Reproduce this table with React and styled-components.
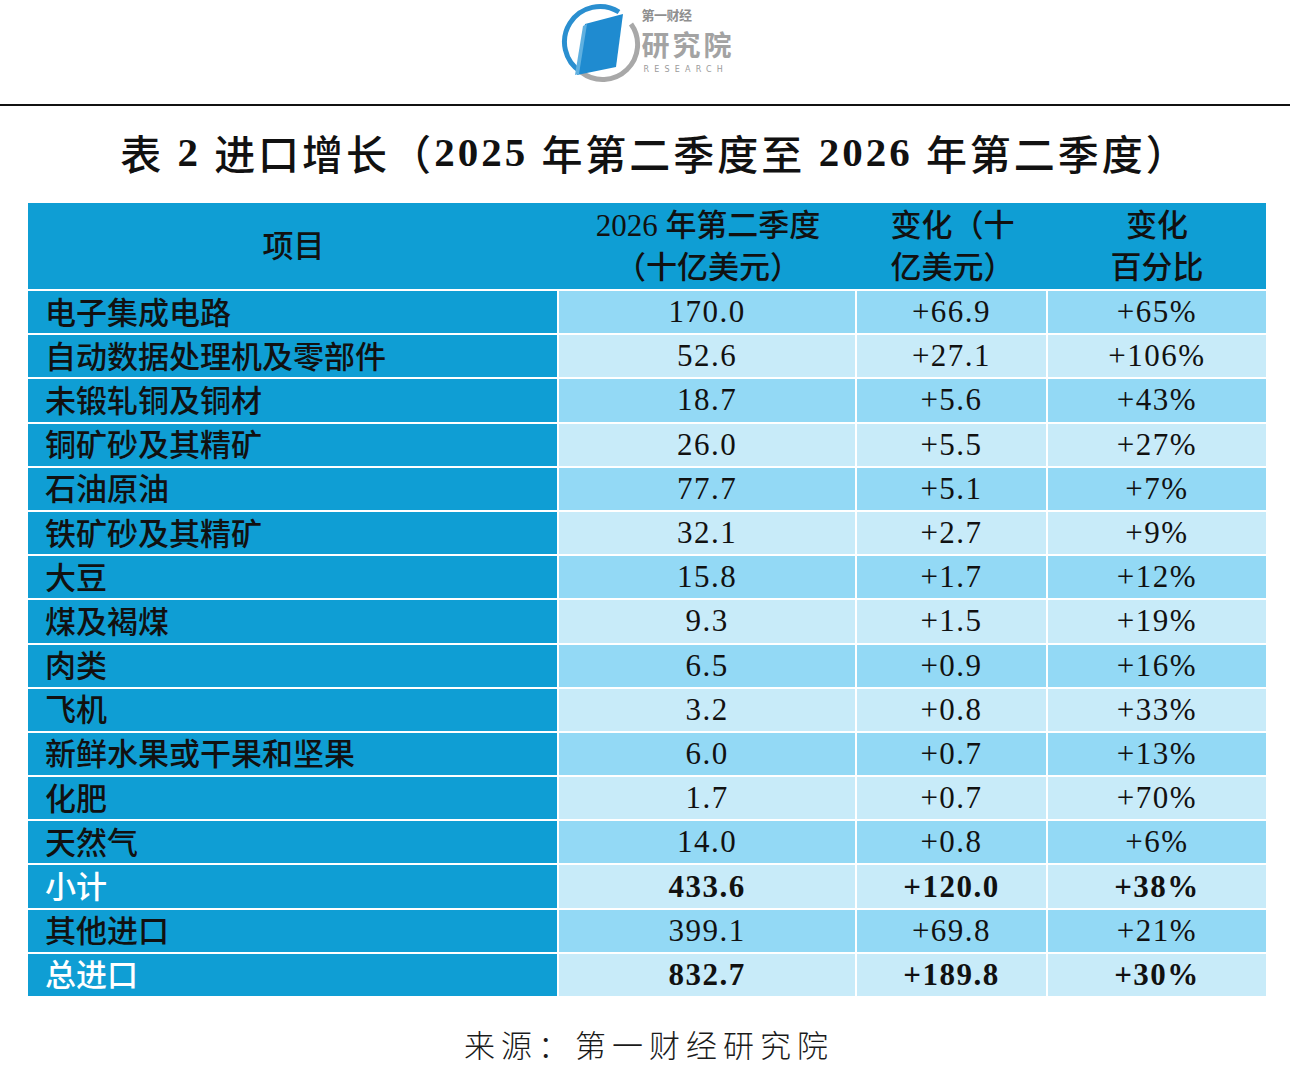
import React from "react";
import styled, { createGlobalStyle } from "styled-components";

const GlobalStyle = createGlobalStyle`
  html, body {
    margin: 0;
    padding: 0;
    background: #ffffff;
  }
  body {
    font-family: "Noto Sans CJK SC", "Noto Sans", sans-serif;
    color: #111111;
  }
`;

const DARK = "#0f9ed4";
const LIGHT = "#93d9f5";
const LIGHTER = "#c8ebf9";

const rows = [
  { name: "电子集成电路", value: "170.0", change: "+66.9", pct: "+65%" },
  { name: "自动数据处理机及零部件", value: "52.6", change: "+27.1", pct: "+106%" },
  { name: "未锻轧铜及铜材", value: "18.7", change: "+5.6", pct: "+43%" },
  { name: "铜矿砂及其精矿", value: "26.0", change: "+5.5", pct: "+27%" },
  { name: "石油原油", value: "77.7", change: "+5.1", pct: "+7%" },
  { name: "铁矿砂及其精矿", value: "32.1", change: "+2.7", pct: "+9%" },
  { name: "大豆", value: "15.8", change: "+1.7", pct: "+12%" },
  { name: "煤及褐煤", value: "9.3", change: "+1.5", pct: "+19%" },
  { name: "肉类", value: "6.5", change: "+0.9", pct: "+16%" },
  { name: "飞机", value: "3.2", change: "+0.8", pct: "+33%" },
  { name: "新鲜水果或干果和坚果", value: "6.0", change: "+0.7", pct: "+13%" },
  { name: "化肥", value: "1.7", change: "+0.7", pct: "+70%" },
  { name: "天然气", value: "14.0", change: "+0.8", pct: "+6%" },
  { name: "小计", value: "433.6", change: "+120.0", pct: "+38%", total: true },
  { name: "其他进口", value: "399.1", change: "+69.8", pct: "+21%" },
  { name: "总进口", value: "832.7", change: "+189.8", pct: "+30%", total: true },
];

const Page = styled.div`
  width: 1290px;
`;

const LogoBar = styled.header`
  height: 104px;
  display: flex;
  justify-content: center;
  align-items: flex-start;
  padding-top: 2px;
  box-sizing: border-box;
`;

const Logo = styled.div`
  display: flex;
  align-items: flex-start;
  margin-left: 6px;
`;

const LogoWords = styled.div`
  display: flex;
  flex-direction: column;
  padding-top: 3px;
`;

const LogoSmall = styled.span`
  font-size: 13px;
  line-height: 19px;
  font-weight: 700;
  letter-spacing: -0.5px;
  color: #8f8f8f;
`;

const LogoBig = styled.span`
  font-size: 28px;
  line-height: 41px;
  font-weight: 700;
  letter-spacing: 3px;
  color: #a3a3a3;
`;

const LogoTiny = styled.span`
  font-family: "DejaVu Sans", sans-serif;
  font-size: 8px;
  line-height: 10px;
  letter-spacing: 5.2px;
  color: #9b9b9b;
  padding-left: 2px;
`;

const Rule = styled.hr`
  margin: 0;
  border: 0;
  height: 2px;
  background: #111111;
`;

const Title = styled.h1`
  margin: 0;
  height: 97px;
  padding: 0 0 6px 20px;
  box-sizing: border-box;
  display: flex;
  align-items: center;
  justify-content: center;
  font-family: "Liberation Serif", "Noto Sans CJK SC", serif;
  font-size: 41px;
  font-weight: 500;
  letter-spacing: 3px;
  color: #111111;
  white-space: pre;
`;

const Digits = styled.b`
  font-weight: 700;
`;

const Table = styled.section`
  margin-left: 28px;
  width: 1238px;
`;

const HeadRow = styled.div`
  display: grid;
  grid-template-columns: 531px 298px 191px 218px;
  height: 86px;
  background: ${DARK};
`;

const HeadCell = styled.div`
  display: flex;
  align-items: center;
  justify-content: center;
  text-align: center;
  font-family: "Liberation Serif", "Noto Sans CJK SC", serif;
  font-size: 31px;
  line-height: 42px;
  font-weight: 500;
  color: #111111;
  padding-top: 2px;
`;

const Body = styled.div`
  display: grid;
  grid-template-columns: 529px 296px 189px 218px;
  grid-auto-rows: 42.2px;
  gap: 2px;
  margin-top: 2px;
  background: #ffffff;
`;

const NameCell = styled.div`
  background: ${DARK};
  display: flex;
  align-items: center;
  padding-left: 17px;
  padding-bottom: 4px;
  box-sizing: border-box;
  font-size: 31px;
  font-weight: 500;
  color: ${(p) => (p.$total ? "#ffffff" : "#111111")};
`;

const NumCell = styled.div`
  background: ${(p) => (p.$odd ? LIGHTER : LIGHT)};
  display: flex;
  align-items: center;
  justify-content: center;
  font-family: "Liberation Serif", serif;
  font-size: 31px;
  letter-spacing: 1.5px;
  font-weight: ${(p) => (p.$total ? 700 : 400)};
  color: #111111;
`;

const Source = styled.footer`
  padding-top: 30px;
  text-align: center;
  font-size: 31px;
  line-height: 36px;
  font-weight: 300;
  letter-spacing: 6px;
  color: #1a1a1a;
  padding-left: 8px;
`;

function LogoMark() {
  return (
    <svg width="80" height="80" viewBox="0 0 80 80">
      <path
        d="M58 10 A35 35 0 1 0 20 70"
        fill="none"
        stroke="#2a8fd0"
        strokeWidth="5"
      />
      <path
        d="M20 70 A35 35 0 0 0 70 22"
        fill="none"
        stroke="#a8a8a8"
        strokeWidth="5"
      />
      <polygon points="24,22 62,12 55,65 16,73" fill="#1f8bd0" />
      <polygon points="22,24 26,22 18,72 14,73" fill="#5fb0e0" />
    </svg>
  );
}

export default function App() {
  return (
    <Page>
      <GlobalStyle />
      <LogoBar>
        <Logo>
          <LogoMark />
          <LogoWords>
            <LogoSmall>第一财经</LogoSmall>
            <LogoBig>研究院</LogoBig>
            <LogoTiny>RESEARCH</LogoTiny>
          </LogoWords>
        </Logo>
      </LogoBar>
      <Rule />
      <Title>
        表 <Digits>2</Digits> 进口增长（<Digits>2025</Digits> 年第二季度至{" "}
        <Digits>2026</Digits> 年第二季度）
      </Title>
      <Table>
        <HeadRow>
          <HeadCell>项目</HeadCell>
          <HeadCell>
            2026 年第二季度
            <br />
            （十亿美元）
          </HeadCell>
          <HeadCell>
            变化（十
            <br />
            亿美元）
          </HeadCell>
          <HeadCell>
            变化
            <br />
            百分比
          </HeadCell>
        </HeadRow>
        <Body>
          {rows.map((r, i) => (
            <React.Fragment key={r.name}>
              <NameCell $total={r.total}>{r.name}</NameCell>
              <NumCell $odd={i % 2 === 1} $total={r.total}>
                {r.value}
              </NumCell>
              <NumCell $odd={i % 2 === 1} $total={r.total}>
                {r.change}
              </NumCell>
              <NumCell $odd={i % 2 === 1} $total={r.total}>
                {r.pct}
              </NumCell>
            </React.Fragment>
          ))}
        </Body>
      </Table>
      <Source>来源：第一财经研究院</Source>
    </Page>
  );
}
